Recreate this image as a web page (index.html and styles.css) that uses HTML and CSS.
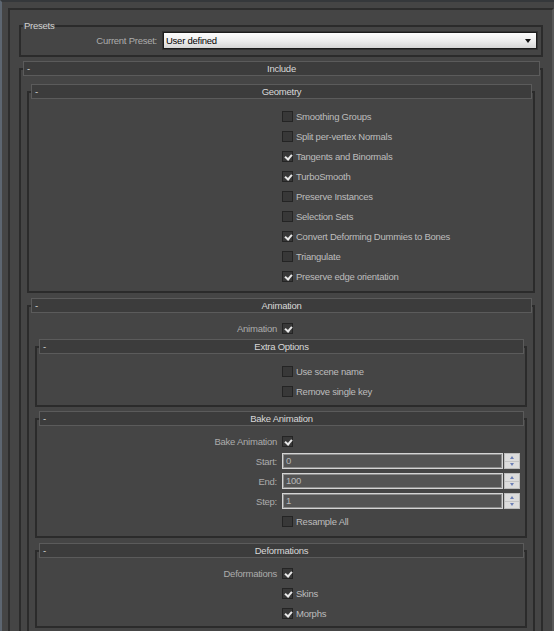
FILE: index.html
```html
<!DOCTYPE html>
<html lang="en">
<head>
    <meta charset="UTF-8">
    <title>FBX Export</title>
    <link rel="stylesheet" href="styles.css">
</head>
<body>
    <div class="frame">
        <fieldset class="presets">
            <legend>Presets</legend>
            <div class="preset-row">
                <span class="lbl">Current Preset:</span>
                <div class="select"><span>User defined</span><i class="caret"></i></div>
            </div>
        </fieldset>

        <section class="rollout">
            <div class="head"><span class="toggle">-</span><span class="title">Include</span></div>

            <section class="rollout geometry">
                <div class="head"><span class="toggle">-</span><span class="title">Geometry</span></div>
                <div class="body">
                    <div class="row"><span></span><label class="check"><span class="cb"></span>Smoothing Groups</label></div>
                    <div class="row"><span></span><label class="check"><span class="cb"></span>Split per-vertex Normals</label></div>
                    <div class="row"><span></span><label class="check"><span class="cb on"></span>Tangents and Binormals</label></div>
                    <div class="row"><span></span><label class="check"><span class="cb on"></span>TurboSmooth</label></div>
                    <div class="row"><span></span><label class="check"><span class="cb"></span>Preserve Instances</label></div>
                    <div class="row"><span></span><label class="check"><span class="cb"></span>Selection Sets</label></div>
                    <div class="row"><span></span><label class="check"><span class="cb on"></span>Convert Deforming Dummies to Bones</label></div>
                    <div class="row"><span></span><label class="check"><span class="cb"></span>Triangulate</label></div>
                    <div class="row"><span></span><label class="check"><span class="cb on"></span>Preserve edge orientation</label></div>
                </div>
            </section>

            <section class="rollout animation">
                <div class="head"><span class="toggle">-</span><span class="title">Animation</span></div>
                <div class="body">
                    <div class="row"><span class="lbl">Animation</span><span class="check"><span class="cb on"></span></span></div>

                    <section class="rollout extra">
                        <div class="head"><span class="toggle">-</span><span class="title">Extra Options</span></div>
                        <div class="body">
                            <div class="row"><span></span><label class="check"><span class="cb"></span>Use scene name</label></div>
                            <div class="row"><span></span><label class="check"><span class="cb"></span>Remove single key</label></div>
                        </div>
                    </section>

                    <section class="rollout bake">
                        <div class="head"><span class="toggle">-</span><span class="title">Bake Animation</span></div>
                        <div class="body">
                            <div class="row"><span class="lbl">Bake Animation</span><span class="check"><span class="cb on"></span></span></div>
                            <div class="row">
                                <span class="lbl">Start:</span>
                                <div class="spin"><span class="field">0</span><span class="arrows"><i class="up"></i><i class="down"></i></span></div>
                            </div>
                            <div class="row">
                                <span class="lbl">End:</span>
                                <div class="spin"><span class="field">100</span><span class="arrows"><i class="up"></i><i class="down"></i></span></div>
                            </div>
                            <div class="row">
                                <span class="lbl">Step:</span>
                                <div class="spin"><span class="field">1</span><span class="arrows"><i class="up"></i><i class="down"></i></span></div>
                            </div>
                            <div class="row"><span></span><label class="check"><span class="cb"></span>Resample All</label></div>
                        </div>
                    </section>

                    <section class="rollout deform">
                        <div class="head"><span class="toggle">-</span><span class="title">Deformations</span></div>
                        <div class="body">
                            <div class="row"><span class="lbl">Deformations</span><span class="check"><span class="cb on"></span></span></div>
                            <div class="row"><span></span><label class="check"><span class="cb on"></span>Skins</label></div>
                            <div class="row"><span></span><label class="check"><span class="cb on"></span>Morphs</label></div>
                        </div>
                    </section>
                </div>
            </section>
        </section>
    </div>
</body>
</html>
```

FILE: styles.css
```css
* {
    box-sizing: border-box;
}
body {
    margin: 0;
    height: 631px;
    overflow: hidden;
    background: #454545;
    border-top: 2px solid #35383b;
    border-left: 2px solid #5d6671;
    font-family: "Liberation Sans", Arial, sans-serif;
    font-size: 9.5px;
    letter-spacing: -0.25px;
    color: #bdbdbd;
}
.frame {
    margin: 6px 0 0 6px;
    height: 700px;
    padding: 10px 9px 0 9px;
    border: 2px solid #2d2d2d;
    border-right-color: #585858;
}

/* presets group */
.presets {
    margin: 0;
    min-width: 0;
    padding: 0 0 6px 0;
    border: 2px solid #2b2b2b;
}
.presets legend {
    margin-left: 2px;
    padding: 0 1px;
    line-height: 12px;
    color: #d2d2d2;
}
.preset-row {
    display: grid;
    grid-template-columns: 136px 374px;
    column-gap: 6px;
    align-items: center;
}
.lbl {
    text-align: right;
    color: #acacac;
}
.select {
    display: flex;
    align-items: center;
    justify-content: space-between;
    height: 17px;
    padding: 0 5px 0 2px;
    border: 1px solid #1c1c1c;
    box-shadow: 0 0 0 1px #333;
    background: linear-gradient(#fdfdfd, #ececec 55%, #d6d6d6);
    color: #000;
}
.caret {
    border-left: 3.5px solid transparent;
    border-right: 3.5px solid transparent;
    border-top: 4px solid #111;
}

/* rollouts */
.rollout {
    margin-top: 11px;
    border: 2px solid #2b2b2b;
}
.rollout .rollout {
    margin: 12px 6px 0;
}
.rollout .geometry {
    margin-top: 15px;
}
.rollout .extra {
    margin-top: 8px;
}
.rollout .bake {
    margin-top: 11px;
}
.head {
    display: flex;
    height: 15px;
    margin: -9px 1px 0 2px;
    border: 1px solid #5b5b5b;
    background: #3c3c3c;
    color: #d8d8d8;
    line-height: 13px;
}
.head .toggle {
    width: 12px;
    padding-left: 3px;
}
.head .title {
    flex: 1;
    margin-right: 12px;
    text-align: center;
}
.body {
    padding: 5px 0 5px;
}
.geometry > .body,
.extra > .body {
    padding: 7px 0 5px;
}
.extra > .body {
    padding-bottom: 4px;
}
.deform > .body {
    padding-bottom: 3px;
}
.row {
    display: grid;
    grid-template-columns: 248px 1fr;
    column-gap: 5px;
    height: 20px;
    align-items: center;
}
.rollout .rollout .rollout .row {
    grid-template-columns: 240px 1fr;
}
.check {
    display: flex;
    align-items: center;
    gap: 3px;
}
.cb {
    position: relative;
    flex: none;
    width: 11px;
    height: 11px;
    border: 1px solid #242424;
    background: #383838;
}
.cb.on::after {
    content: "";
    position: absolute;
    left: 3px;
    top: 1px;
    width: 3px;
    height: 5px;
    border: solid #e8e8e8;
    border-width: 0 2px 2px 0;
    transform: rotate(40deg);
}

/* spinners */
.spin {
    display: flex;
    align-items: center;
    gap: 1px;
}
.field {
    width: 221px;
    height: 16px;
    padding-left: 3px;
    border: 1px solid #d4d4d4;
    box-shadow: inset 0 0 0 1px #8c8c8c;
    background: #545454;
    color: #b8b8b8;
    line-height: 14px;
}
.arrows {
    display: flex;
    flex-direction: column;
    width: 16px;
    height: 16px;
    border: 1px solid #bdbdbd;
    background: #dcdcdc;
}
.arrows i {
    flex: 1;
    display: flex;
    align-items: center;
    justify-content: center;
}
.arrows .up {
    border-bottom: 1px solid #c4c4c4;
}
.arrows .up::before {
    content: "";
    border-left: 2.5px solid transparent;
    border-right: 2.5px solid transparent;
    border-bottom: 3px solid #6c7fb6;
}
.arrows .down::before {
    content: "";
    border-left: 2.5px solid transparent;
    border-right: 2.5px solid transparent;
    border-top: 3px solid #6c7fb6;
}
```
